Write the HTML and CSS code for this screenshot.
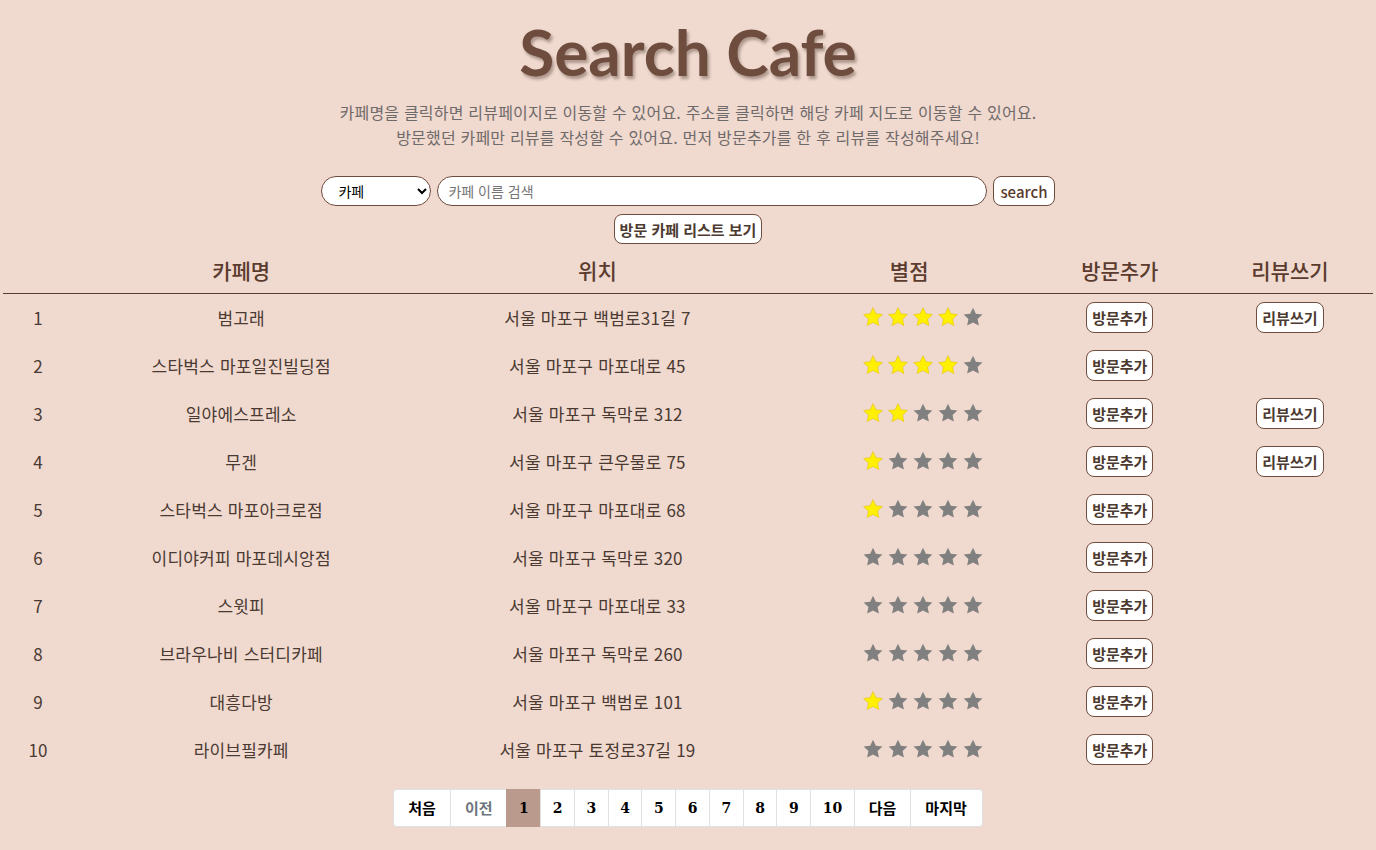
FILE: index.html
```html
<!DOCTYPE html>
<html lang="ko">
<head>
<meta charset="utf-8">
<title>Search Cafe</title>
<link rel="stylesheet" href="styles.css">
</head>
<body>
<header class="hero">
  <h1 class="title">Search Cafe</h1>
  <p class="desc">카페명을 클릭하면 리뷰페이지로 이동할 수 있어요. 주소를 클릭하면 해당 카페 지도로 이동할 수 있어요.<br>방문했던 카페만 리뷰를 작성할 수 있어요. 먼저 방문추가를 한 후 리뷰를 작성해주세요!</p>
</header>
<form class="search">
  <select class="sel"><option>카페</option><option>주소</option></select>
  <input class="query" type="text" placeholder="카페 이름 검색">
  <button class="btn btn-search" type="button">search</button>
</form>
<div class="visited"><button class="btn btn-bold" type="button">방문 카페 리스트 보기</button></div>

<table class="list">
  <colgroup>
    <col style="width:70px"><col style="width:336px"><col style="width:376px"><col style="width:247px"><col style="width:174px"><col style="width:166px">
  </colgroup>
  <thead>
    <tr><th></th><th>카페명</th><th>위치</th><th>별점</th><th>방문추가</th><th>리뷰쓰기</th></tr>
  </thead>
  <tbody id="rows"></tbody>
</table>

<nav class="pager">
  <a class="pg">처음</a><a class="pg disabled">이전</a><a class="pg num active">1</a><a class="pg num">2</a><a class="pg num">3</a><a class="pg num">4</a><a class="pg num">5</a><a class="pg num">6</a><a class="pg num">7</a><a class="pg num">8</a><a class="pg num">9</a><a class="pg num">10</a><a class="pg">다음</a><a class="pg">마지막</a>
</nav>
<script src="app.js"></script>
</body>
</html>
```

FILE: app.js
```js
var data = [
  ["범고래","서울 마포구 백범로31길 7",4,true],
  ["스타벅스 마포일진빌딩점","서울 마포구 마포대로 45",4,false],
  ["일야에스프레소","서울 마포구 독막로 312",2,true],
  ["무겐","서울 마포구 큰우물로 75",1,true],
  ["스타벅스 마포아크로점","서울 마포구 마포대로 68",1,false],
  ["이디야커피 마포데시앙점","서울 마포구 독막로 320",0,false],
  ["스윗피","서울 마포구 마포대로 33",0,false],
  ["브라우나비 스터디카페","서울 마포구 독막로 260",0,false],
  ["대흥다방","서울 마포구 백범로 101",1,false],
  ["라이브필카페","서울 마포구 토정로37길 19",0,false]
];
var star = '<svg class="star" viewBox="0 0 24 24" width="22" height="22"><path d="M12 1.8l3.1 6.6 7.2.9-5.3 5 1.4 7.1L12 17.9l-6.4 3.5 1.4-7.1-5.3-5 7.2-.9z"/></svg>';
var html = "";
data.forEach(function (d, i) {
  var s = "";
  for (var k = 0; k < 5; k++) s += star.replace('class="star"', 'class="star' + (k < d[2] ? ' on' : '') + '"');
  html += '<tr><td>' + (i + 1) + '</td><td><a class="link">' + d[0] + '</a></td><td><a class="link">' + d[1] + '</a></td>' +
    '<td><span class="stars">' + s + '</span></td>' +
    '<td><button class="btn btn-bold" type="button">방문추가</button></td>' +
    '<td>' + (d[3] ? '<button class="btn btn-bold" type="button">리뷰쓰기</button>' : '') + '</td></tr>';
});
document.getElementById("rows").innerHTML = html;
```

FILE: styles.css
```css
html, body { background: #f0d9cf; }
body {
  margin: 0;
  padding: 0 3px 20px;
  font-family: "Noto Sans CJK KR", "Noto Sans", sans-serif;
  color: #4d3a30;
}
.hero { text-align: center; padding-top: 14px; }
.title {
  margin: 0;
  font-family: "Lato", "Noto Sans", sans-serif;
  font-weight: 700;
  font-size: 64px;
  line-height: 76px;
  color: #6e4c3e;
  text-shadow: 2px 3px 3px rgba(90, 70, 60, 0.45);
}
.desc {
  margin: 10px 0 0;
  font-size: 16px;
  line-height: 25px;
  letter-spacing: 0.2px;
  color: #6f6a6a;
}
.search {
  display: flex;
  justify-content: center;
  align-items: center;
  gap: 6px;
  margin-top: 26px;
}
.sel {
  width: 110px;
  height: 30px;
  border: 1px solid #6e4c3e;
  border-radius: 15px;
  background: #fff;
  padding: 0 6px 0 12px;
  font-family: inherit;
  font-size: 14px;
  color: #000;
}
.query {
  width: 550px;
  height: 30px;
  box-sizing: border-box;
  border: 1px solid #6e4c3e;
  border-radius: 15px;
  background: #fff;
  padding: 0 10px;
  font-family: inherit;
  font-size: 14px;
}
.query::placeholder { color: #757575; }
.btn {
  background: #fff;
  border: 1px solid #6e4c3e;
  border-radius: 8px;
  height: 30px;
  padding: 0 5px;
  font-family: inherit;
  font-size: 15px;
  color: #5a3b2e;
}
.btn-search { font-weight: 500; padding: 0 6px; }
.btn-bold { font-weight: 700; color: #4d3a30; }
.visited { text-align: center; margin-top: 8px; }
.list {
  width: 100%;
  border-collapse: collapse;
  table-layout: fixed;
  margin-top: 3px;
}
.list th {
  font-size: 21px;
  font-weight: 500;
  color: #5a3b2e;
  height: 46px;
  border-bottom: 1px solid #5a3b2e;
  padding: 0;
}
.list td {
  text-align: center;
  height: 47px;
  font-size: 17px;
  letter-spacing: 0.2px;
  border-bottom: 1px solid #eadbd4;
  padding: 0;
  color: #4a3a32;
}
.list tbody tr:last-child td { border-bottom: none; }
.list .btn { height: 31px; }
.link { color: inherit; text-decoration: none; cursor: pointer; }
.stars { display: inline-flex; gap: 3px; padding-left: 27px; vertical-align: middle; position: relative; top: -3px; }
.star { fill: #808080; }
.star.on { fill: #ffef00; stroke: #e0c000; stroke-width: 0.6; }
.pager {
  display: flex;
  justify-content: center;
  margin-top: 16px;
}
.pg {
  display: block;
  padding: 0 14px;
  height: 36px;
  line-height: 36px;
  background: #fff;
  border: 1px solid #dee2e6;
  margin-left: -1px;
  font-size: 15px;
  font-weight: 700;
  color: #000;
  font-family: "Noto Sans CJK KR", sans-serif;
}
.pg.num { font-family: "DejaVu Serif", serif; font-size: 14px; padding: 0 11.5px; }
.pg:first-child { border-radius: 4px 0 0 4px; margin-left: 0; }
.pg:last-child { border-radius: 0 4px 4px 0; padding-right: 15px; }
.pg.disabled { color: #6c757d; }
.pg.active { background: #b99a8c; border-color: #b99a8c; }
```
